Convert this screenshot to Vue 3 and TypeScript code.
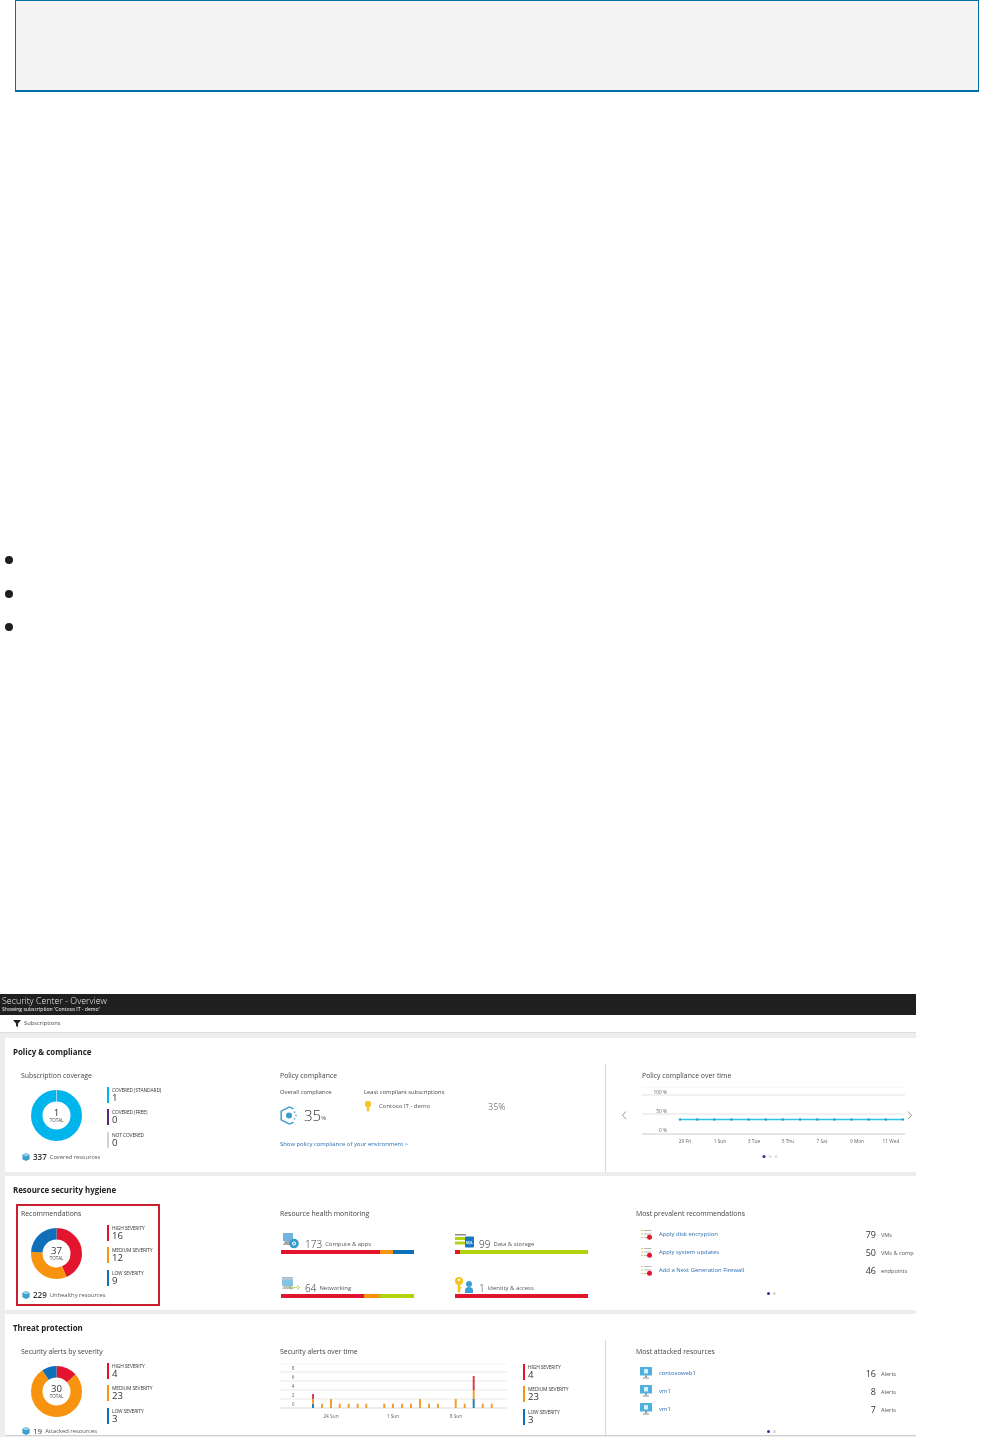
<script setup lang="ts">
interface Sev { label: string; value: number; color: string }
interface Seg { color: string; share: number }

const R = 19.75
const CIRC = 2 * Math.PI * R

function arcs(items: Sev[]) {
  const total = items.reduce((s, i) => s + i.value, 0)
  let run = 0
  return items.filter(i => i.value > 0).map(i => {
    const len = (i.value / total) * CIRC
    const arc = { color: i.color, dash: `${len} ${CIRC - len}`, offset: -run }
    run += len
    return arc
  })
}

const coverage: Sev[] = [
  { label: 'COVERED (STANDARD)', value: 1, color: '#00b4ec' },
  { label: 'COVERED (FREE)', value: 0, color: '#68217a' },
  { label: 'NOT COVERED', value: 0, color: '#d2d2d2' },
]
const recs: Sev[] = [
  { label: 'HIGH SEVERITY', value: 16, color: '#e3142d' },
  { label: 'MEDIUM SEVERITY', value: 12, color: '#f7930f' },
  { label: 'LOW SEVERITY', value: 9, color: '#0f6fb8' },
]
const alerts: Sev[] = [
  { label: 'HIGH SEVERITY', value: 4, color: '#e3142d' },
  { label: 'MEDIUM SEVERITY', value: 23, color: '#f7930f' },
  { label: 'LOW SEVERITY', value: 3, color: '#0f6fb8' },
]

const RED = '#e3142d', ORG = '#f7930f', BLU = '#0f6fb8', GRN = '#b5d20f'
const health: { n: number; label: string; kind: string; segs: Seg[] }[] = [
  { n: 173, label: 'Compute & apps', kind: 'compute', segs: [{ color: RED, share: 74.5 }, { color: ORG, share: 10 }, { color: BLU, share: 15.5 }] },
  { n: 99, label: 'Data & storage', kind: 'data', segs: [{ color: RED, share: 4 }, { color: GRN, share: 96 }] },
  { n: 64, label: 'Networking', kind: 'net', segs: [{ color: RED, share: 62.5 }, { color: ORG, share: 12 }, { color: GRN, share: 25.5 }] },
  { n: 1, label: 'Identity & access', kind: 'identity', segs: [{ color: RED, share: 100 }] },
]

const prevalent = [
  { name: 'Apply disk encryption', n: 79, unit: 'VMs' },
  { name: 'Apply system updates', n: 50, unit: 'VMs & comp' },
  { name: 'Add a Next Generation Firewall', n: 46, unit: 'endpoints' },
]
const attacked = [
  { name: 'contosoweb1', n: 16, unit: 'Alerts' },
  { name: 'vm1', n: 8, unit: 'Alerts' },
  { name: 'vm1', n: 7, unit: 'Alerts' },
]

const lineXs = Array.from({ length: 14 }, (_, i) => 680 + i * 17.15)
const dayLabels = [
  { t: '29 Fri', x: 685 }, { t: '1 Sun', x: 720 }, { t: '3 Tue', x: 754 }, { t: '5 Thu', x: 788 },
  { t: '7 Sat', x: 822 }, { t: '9 Mon', x: 857 }, { t: '11 Wed', x: 891 },
]
const pctLabels = [{ t: '100 %', y: 1092 }, { t: '50 %', y: 1111 }, { t: '0 %', y: 1130 }]
const gridYs = [1087, 1095, 1114, 1134]

const alertGrid = [1364, 1372, 1381, 1390, 1399, 1408]
const alertAxis = [{ t: '8', y: 1368 }, { t: '6', y: 1377 }, { t: '4', y: 1386 }, { t: '2', y: 1395 }, { t: '0', y: 1404 }]
const small = [322, 339.7, 348.7, 357.7, 366.3, 384.3, 393, 402, 411, 429, 438, 464.7, 482.7, 491.7]
const tall = [331, 420, 455.7]
const alertDays = [{ t: '24 Sun', x: 331 }, { t: '1 Sun', x: 393 }, { t: '8 Sun', x: 456 }]
</script>

<template>
  <div class="page">
    <div class="note"></div>

    <ul class="bullets">
      <li v-for="i in 3" :key="i"></li>
    </ul>

    <div class="shot">
      <header class="blade">
        <div class="blade-title">Security Center - Overview</div>
        <div class="blade-sub">Showing subscription 'Contoso IT - demo'</div>
      </header>
      <div class="toolbar">
        <svg class="funnel" viewBox="0 0 8 7"><path d="M0 0h8L5 3.4V7L3 6V3.4z" fill="#222" /></svg>
        <span>Subscriptions</span>
      </div>

      <!-- Policy & compliance -->
      <section class="card">
        <h2>Policy &amp; compliance</h2>
        <div class="grid">
          <div class="col-donut">
            <h3>Subscription coverage</h3>
            <div class="donut-row">
              <div class="donut">
                <svg viewBox="0 0 51 51">
                  <circle cx="25.5" cy="25.5" :r="R" fill="none" stroke="#00b4ec" stroke-width="11.5" />
                  <path d="M25.5 0v11.5" stroke="#fff" stroke-width=".6" />
                </svg>
                <div class="donut-c"><b>1</b><i>TOTAL</i></div>
              </div>
              <div class="legend">
                <div v-for="s in coverage" :key="s.label" class="leg" :style="{ borderLeftColor: s.color }">
                  <span>{{ s.label }}</span><b>{{ s.value }}</b>
                </div>
              </div>
            </div>
            <div class="foot">
              <svg class="cube" viewBox="0 0 8 8"><path d="M4 0l3.6 1.8v4.4L4 8 .4 6.2V1.8z" fill="#3f9fc9" /><path d="M4 0l3.6 1.8L4 3.6.4 1.8z" fill="#8fd0ea" /></svg>
              <b>337</b><span>Covered resources</span>
            </div>
          </div>

          <div class="col-mid">
            <h3>Policy compliance</h3>
            <div class="compliance">
              <div class="overall">
                <div class="mini">Overall compliance</div>
                <div class="gauge">
                  <svg viewBox="0 0 18 19">
                    <path d="M9.500 .8 1.200 5.200v8.600l8.300 4.400" fill="none" stroke="#3a9ccd" stroke-width="1.500" />
                    <path d="M9.500 .8l4 2.100M9.500 18.200l4-2.100" fill="none" stroke="#3a9ccd" stroke-width="1.300" />
                    <circle cx="9" cy="9.500" r="3" fill="#3a9ccd" />
                    <circle cx="14.500" cy="6.300" r="1" fill="#6cbde2" /><circle cx="16" cy="9.500" r="1" fill="#6cbde2" /><circle cx="14.500" cy="12.700" r="1" fill="#6cbde2" />
                  </svg>
                  <span class="big">35</span><span class="pct">%</span>
                </div>
              </div>
              <div class="least">
                <div class="mini">Least compliant subscriptions</div>
                <div class="least-row">
                  <svg class="key" viewBox="0 0 8 11"><circle cx="4" cy="3" r="3.200" fill="#f7c52b" /><path d="M2.700 5h2.600v4.400L4 11 2.700 9.400z" fill="#f7c52b" /></svg>
                  <span class="least-name">Contoso IT - demo</span>
                  <span class="least-pct">35%</span>
                </div>
              </div>
            </div>
            <a class="link show">Show policy compliance of your environment &gt;</a>
          </div>

          <div class="col-right divided">
            <h3 class="pad-over">Policy compliance over time</h3>
            <svg class="over-time" viewBox="606 1085 309 78">
              <line v-for="y in gridYs" :key="y" x1="642" x2="905" :y1="y" :y2="y" :stroke="y === 1134 ? '#bcbcbc' : y === 1087 ? '#f1f1f1' : '#dadada'" stroke-width=".8" />
              <text v-for="p in pctLabels" :key="p.t" x="667" :y="p.y + 1.8" text-anchor="end" class="axis">{{ p.t }}</text>
              <line x1="680" x2="903" y1="1119.5" y2="1119.5" stroke="#32c3e6" stroke-width="1.300" />
              <circle v-for="x in lineXs" :key="x" :cx="x" cy="1119.5" r="1.200" fill="#1fa3c4" />
              <text v-for="d in dayLabels" :key="d.t" :x="d.x" y="1143" text-anchor="middle" class="axis">{{ d.t }}</text>
              <path d="M626 1111.5l-3.6 3.8 3.6 3.8M908 1111.5l3.6 3.8-3.6 3.8" fill="none" stroke="#666" stroke-width=".7" />
              <circle cx="764" cy="1156.5" r="1.5" fill="#2b2f9e" />
              <circle cx="770" cy="1156.5" r="1.3" fill="#d8d8d8" />
              <circle cx="776" cy="1156.5" r="1.3" fill="#d8d8d8" />
            </svg>
          </div>
        </div>
      </section>

      <!-- Resource security hygiene -->
      <section class="card">
        <h2>Resource security hygiene</h2>
        <div class="grid">
          <div class="col-donut">
            <div class="callout"></div>
            <h3>Recommendations</h3>
            <div class="donut-row">
              <div class="donut">
                <svg viewBox="0 0 51 51">
                  <g transform="rotate(-90 25.5 25.5)">
                    <circle v-for="a in arcs(recs)" :key="a.color" cx="25.5" cy="25.5" :r="R" fill="none" :stroke="a.color" stroke-width="11.5" :stroke-dasharray="a.dash" :stroke-dashoffset="a.offset" />
                  </g>
                </svg>
                <div class="donut-c"><b>37</b><i>TOTAL</i></div>
              </div>
              <div class="legend">
                <div v-for="s in recs" :key="s.label" class="leg" :style="{ borderLeftColor: s.color }">
                  <span>{{ s.label }}</span><b>{{ s.value }}</b>
                </div>
              </div>
            </div>
            <div class="foot">
              <svg class="cube" viewBox="0 0 8 8"><path d="M4 0l3.6 1.8v4.4L4 8 .4 6.2V1.8z" fill="#3f9fc9" /><path d="M4 0l3.6 1.8L4 3.6.4 1.8z" fill="#8fd0ea" /></svg>
              <b>229</b><span>Unhealthy resources</span>
            </div>
          </div>

          <div class="col-mid">
            <h3>Resource health monitoring</h3>
            <div class="health">
              <div v-for="h in health" :key="h.label" class="health-item">
                <div class="health-head">
                  <svg class="health-icon" viewBox="0 0 19 17">
                    <template v-if="h.kind === 'compute'">
                      <rect x="2" y="0" width="10" height="8" fill="#72b4dc" /><path d="M4 8h6l2 4H2z" fill="#a6a6a6" />
                      <circle cx="13" cy="10.500" r="4.800" fill="#3a9ccd" /><circle cx="13" cy="10.500" r="2" fill="#fff" /><circle cx="13" cy="10.500" r="1" fill="#3a9ccd" />
                    </template>
                    <template v-else-if="h.kind === 'data'">
                      <rect x="0" y="1" width="11" height="1.500" fill="#8c8c8c" /><rect x="0" y="4" width="11" height="3" fill="#b5d20f" /><rect x="0" y="8.500" width="11" height="3" fill="#b5d20f" />
                      <rect x="10" y="3.500" width="9" height="11" rx="1" fill="#1a78c2" /><text x="14.500" y="10.500" text-anchor="middle" class="sql">SQL</text>
                    </template>
                    <template v-else-if="h.kind === 'net'">
                      <rect x="1" y="0" width="11" height="9" fill="#86c3e3" /><rect x="1" y="1" width="11" height="1.500" fill="#c8c8c8" /><path d="M3 9h7l3 3H1z" fill="#c0c0c0" />
                      <path d="M11 8.500l-2.500 2 2.500 2M16 8.500l2.500 2-2.500 2" fill="none" stroke="#90b820" stroke-width=".8" />
                      <circle cx="11.800" cy="10.500" r=".6" fill="#90b820" /><circle cx="13.500" cy="10.500" r=".6" fill="#90b820" /><circle cx="15.200" cy="10.500" r=".6" fill="#90b820" />
                    </template>
                    <template v-else>
                      <circle cx="4" cy="4" r="4" fill="#f5c518" /><circle cx="4" cy="3" r="1.200" fill="#fff" /><path d="M2.800 7h2.400v3h1.200v1.500H5.200V15L4 16l-1.200-1z" fill="#f5c518" />
                      <circle cx="14" cy="7" r="3" fill="#3a9fd6" /><path d="M10 16v-3c0-2 1.800-3 4-3s4 1 4 3v3z" fill="#3a9fd6" />
                    </template>
                  </svg>
                  <span class="health-n">{{ h.n }}</span><span class="health-l">{{ h.label }}</span>
                </div>
                <div class="segbar">
                  <i v-for="s in h.segs" :key="s.color" :style="{ width: s.share + '%', background: s.color }"></i>
                </div>
              </div>
            </div>
          </div>

          <div class="col-right">
            <h3>Most prevalent recommendations</h3>
            <div class="rows">
              <div v-for="r in prevalent" :key="r.name" class="row">
                <svg class="row-icon" viewBox="0 0 12 12">
                  <path d="M1 2.500h2M1 6h2M1 9.500h2" stroke="#d7c34a" stroke-width=".9" />
                  <path d="M4 2.500h7.500M4 6h7.500M4 9.500h3.500" stroke="#9a9a9a" stroke-width=".7" />
                  <circle cx="9.500" cy="9.300" r="2.500" fill="#e3142d" />
                </svg>
                <a class="link name">{{ r.name }}</a>
                <span class="num">{{ r.n }}</span>
                <span class="unit">{{ r.unit }}</span>
              </div>
            </div>
            <div class="dots"><i class="on"></i><i></i></div>
          </div>
        </div>
      </section>

      <!-- Threat protection -->
      <section class="card last">
        <h2>Threat protection</h2>
        <div class="grid">
          <div class="col-donut">
            <h3>Security alerts by severity</h3>
            <div class="donut-row">
              <div class="donut">
                <svg viewBox="0 0 51 51">
                  <g transform="rotate(-90 25.5 25.5)">
                    <circle v-for="a in arcs(alerts)" :key="a.color" cx="25.5" cy="25.5" :r="R" fill="none" :stroke="a.color" stroke-width="11.5" :stroke-dasharray="a.dash" :stroke-dashoffset="a.offset" />
                  </g>
                </svg>
                <div class="donut-c"><b>30</b><i>TOTAL</i></div>
              </div>
              <div class="legend">
                <div v-for="s in alerts" :key="s.label" class="leg" :style="{ borderLeftColor: s.color }">
                  <span>{{ s.label }}</span><b>{{ s.value }}</b>
                </div>
              </div>
            </div>
            <div class="foot foot-up">
              <svg class="cube" viewBox="0 0 8 8"><path d="M4 0l3.6 1.8v4.4L4 8 .4 6.2V1.8z" fill="#3f9fc9" /><path d="M4 0l3.6 1.8L4 3.6.4 1.8z" fill="#8fd0ea" /></svg>
              <b class="thin">19</b><span>Attacked resources</span>
            </div>
          </div>

          <div class="col-mid">
            <h3>Security alerts over time</h3>
            <div class="alerts">
              <svg class="alert-chart" viewBox="280 1360 230 62">
                <line v-for="y in alertGrid" :key="y" x1="280" x2="507" :y1="y" :y2="y" :stroke="y === 1408 ? '#c9c9c9' : y === 1364 ? '#f1f1f1' : '#e0e0e0'" stroke-width=".7" />
                <text v-for="a in alertAxis" :key="a.t" x="293" :y="a.y + 1.8" text-anchor="middle" class="axis">{{ a.t }}</text>
                <rect v-for="x in small" :key="x" :x="x - 1" y="1403.700" width="2" height="4.300" fill="#f0a030" />
                <rect v-for="x in tall" :key="x" :x="x - 1" y="1399" width="2" height="9" fill="#f0a030" />
                <rect x="312" y="1403.700" width="2" height="4.300" fill="#2a7fb8" />
                <rect x="312" y="1399" width="2" height="4.700" fill="#f0a030" />
                <rect x="312" y="1394" width="2" height="5" fill="#d9414f" />
                <rect x="472.700" y="1399" width="2" height="9" fill="#2a7fb8" />
                <rect x="472.700" y="1390" width="2" height="9" fill="#f0a030" />
                <rect x="472.700" y="1376" width="2" height="14" fill="#d9414f" />
                <text v-for="d in alertDays" :key="d.t" :x="d.x" y="1418" text-anchor="middle" class="axis">{{ d.t }}</text>
              </svg>
              <div class="legend alert-legend">
                <div v-for="s in alerts" :key="s.label" class="leg" :style="{ borderLeftColor: s.color }">
                  <span>{{ s.label }}</span><b>{{ s.value }}</b>
                </div>
              </div>
            </div>
          </div>

          <div class="col-right divided flush">
            <h3>Most attacked resources</h3>
            <div class="rows low">
              <div v-for="(r, i) in attacked" :key="i" class="row">
                <svg class="row-icon" viewBox="0 0 12 12">
                  <rect x="0" y="0" width="12" height="8.500" rx=".6" fill="#4fb0dc" />
                  <rect x="4" y="2" width="4" height="4.500" fill="#d5eef9" />
                  <path d="M5 8.500h2v1.500H5zM3 10.500h6V11.500H3z" fill="#8a8a8a" />
                </svg>
                <a class="link name">{{ r.name }}</a>
                <span class="num">{{ r.n }}</span>
                <span class="unit">{{ r.unit }}</span>
              </div>
            </div>
            <div class="dots tight"><i class="on"></i><i></i></div>
          </div>
        </div>
      </section>
    </div>
  </div>
</template>

<style>
html, body { margin: 0; background: #fff; }
</style>

<style scoped>
.page { width: 994px; height: 1437px; overflow: hidden; background: #fff; font-family: "Open Sans", "Liberation Sans", sans-serif; }

.note { box-sizing: border-box; width: 964px; height: 92px; margin-left: 15px; background: #f4f4f4; border: 1px solid #0070a8; border-bottom-width: 2px; }

.bullets { list-style: none; margin: 464px 0 0 5px; padding: 0; display: flex; flex-direction: column; gap: 25.5px; }
.bullets li { width: 8px; height: 8px; border-radius: 50%; background: #1f1f1f; }

.shot { width: 916px; height: 443px; margin-top: 362.5px; background: #ededed; overflow: hidden; filter: blur(.42px); color: #333; }

.blade { height: 21px; box-sizing: border-box; background: #1f1f1f; color: #fff; padding: 1px 0 0 2px; }
.blade-title { font-size: 8.9px; line-height: 11px; font-weight: 300; color: #eee; }
.blade-sub { font-size: 5.1px; line-height: 6px; }

.toolbar { height: 18px; box-sizing: border-box; background: #fff; border-bottom: 1px solid #dcdcdc; display: flex; align-items: center; padding-left: 13px; font-size: 5.8px; color: #444; }
.funnel { width: 8px; height: 7px; margin-right: 3px; }

.card { height: 134px; box-sizing: border-box; margin: 5px 0 0 5px; padding-top: 8px; background: #fff; overflow: hidden; }
.card + .card { margin-top: 4px; }
.card.last { height: 122px; border-bottom: 1px solid #cfcfcf; }

h2 { margin: 0 0 13px 8px; font-size: 7.9px; line-height: 12px; font-weight: 700; color: #222; }
h3 { margin: 0; font-size: 6.9px; line-height: 10px; font-weight: 400; color: #444; white-space: nowrap; }

.grid { display: grid; grid-template-columns: 275px 325px 1fr; height: 101px; }
.col-donut { position: relative; padding-left: 16px; }
.callout { position: absolute; left: 11px; top: -5px; width: 144px; height: 102px; box-sizing: border-box; border: 2px solid #c9202f; }

.donut-row { display: flex; margin-top: 6px; }
.donut { position: relative; width: 51px; height: 51px; margin: 3px 25px 0 10px; flex: none; }
.donut svg { display: block; width: 51px; height: 51px; }
.donut-c { position: absolute; inset: 0; display: flex; flex-direction: column; align-items: center; justify-content: center; }
.donut-c b { font-size: 9.6px; line-height: 9px; font-weight: 400; color: #333; }
.donut-c i { font-style: normal; font-size: 4.5px; line-height: 6px; color: #444; }

.legend { display: flex; flex-direction: column; gap: 6.5px; }
.leg { height: 16px; box-sizing: border-box; border-left: 2.5px solid; padding-left: 3px; display: flex; flex-direction: column; }
.leg span { font-size: 4.9px; line-height: 6px; color: #333; white-space: nowrap; letter-spacing: -.12px; }
.leg b { font-size: 9.6px; line-height: 10px; font-weight: 400; color: #333; }

.foot { display: flex; align-items: center; height: 10px; margin: 4px 0 0 1px; }
.foot-up { margin-top: 3.5px; height: 8px; }
.cube { width: 8px; height: 8px; margin-right: 3px; }
.foot b { font-size: 8px; font-weight: 600; line-height: 8px; color: #333; margin-right: 3px; }
.foot b.thin { font-weight: 400; }
.foot span { font-size: 5.8px; line-height: 8px; color: #555; white-space: nowrap; }

.mini { font-size: 5.8px; line-height: 8px; color: #444; white-space: nowrap; }
.compliance { display: flex; margin-top: 7px; }
.overall { width: 84px; }
.gauge { display: flex; align-items: center; height: 19px; margin-top: 10px; }
.gauge svg { width: 18px; height: 19px; margin-right: 6px; }
.big { font-size: 15px; font-weight: 300; color: #333; }
.pct { font-size: 6px; margin-top: 6px; color: #555; }
.least-row { display: flex; align-items: center; height: 11px; margin-top: 5px; }
.key { width: 8px; height: 11px; margin-right: 7px; }
.least-name { width: 109px; font-size: 6px; color: #555; white-space: nowrap; }
.least-pct { font-size: 9px; font-weight: 300; color: #444; }

.link { color: #2a6db0; font-size: 5.9px; line-height: 8px; white-space: nowrap; }
.show { display: block; margin-top: 15px; }

.col-right { min-width: 0; padding-left: 31px; }
.divided { border-left: 1px solid #d6d6d6; margin-top: -7px; padding-top: 7px; padding-left: 30px; }
.pad-over { padding-left: 6px; }
.over-time { display: block; width: 309px; height: 78px; margin: 4px 0 0 -30px; }
.axis { font-size: 4.8px; fill: #666; font-family: "Open Sans", sans-serif; }
.sql { font-size: 3.6px; font-weight: 700; fill: #fff; font-family: "Open Sans", sans-serif; }

.health { display: grid; grid-template-columns: 133px 133px; column-gap: 41px; row-gap: 22.5px; margin: 14px 0 0 1px; }
.health-head { display: flex; height: 17px; }
.health-icon { width: 19px; height: 17px; margin-right: 5px; flex: none; }
.health-n { font-size: 10px; line-height: 12px; margin-top: 5px; font-weight: 300; color: #333; margin-right: 3px; }
.health-l { font-size: 5.9px; line-height: 12px; margin-top: 5.5px; color: #555; white-space: nowrap; }
.segbar { display: flex; height: 4.5px; }
.segbar i { display: block; }

.rows { margin-top: 6px; }
.rows.low { margin-top: 7px; }
.row { display: flex; align-items: center; height: 18px; overflow: hidden; }
.row-icon { width: 12px; height: 12px; margin: 0 7px 0 4px; flex: none; }
.name { flex: 1; min-width: 0; }
.num { font-size: 9px; line-height: 12px; margin-top: 2px; color: #333; }
.unit { width: 35px; flex: none; margin: 2px 0 0 5px; font-size: 5.6px; color: #555; white-space: nowrap; overflow: hidden; }

.dots { display: flex; justify-content: center; gap: 3px; margin-top: 13px; padding-right: 9px; }
.dots.tight { margin-top: 12px; }
.dots i { width: 3px; height: 3px; border-radius: 50%; background: #d8d8d8; }
.dots i.on { background: #2b2f9e; }

.alerts { display: flex; margin-top: 3px; }
.alert-chart { display: block; width: 230px; height: 62px; flex: none; }
.alert-legend { margin: 4px 0 0 13px; }
</style>
